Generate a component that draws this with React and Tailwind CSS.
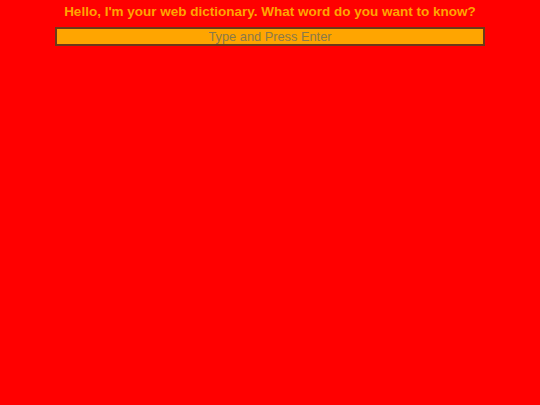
export default function App() {
  return (
    <div className="min-h-screen bg-[#ff0000] flex flex-col items-center font-['Liberation_Sans',Arial,sans-serif]">
      <h1 className="mt-[3px] text-[13.5px] leading-[17px] font-bold text-[#ffa500]">
        Hello, I'm your web dictionary. What word do you want to know?
      </h1>
      <input
        autoFocus
        type="text"
        placeholder="Type and Press Enter"
        className="mt-[7px] w-[430px] h-[19px] bg-[#ffa500] border-2 border-[#6b3a1a] text-center text-[12.8px] text-[#555] placeholder:text-[#8a7a4a] caret-[#cc0000] outline-none"
      />
    </div>
  );
}
